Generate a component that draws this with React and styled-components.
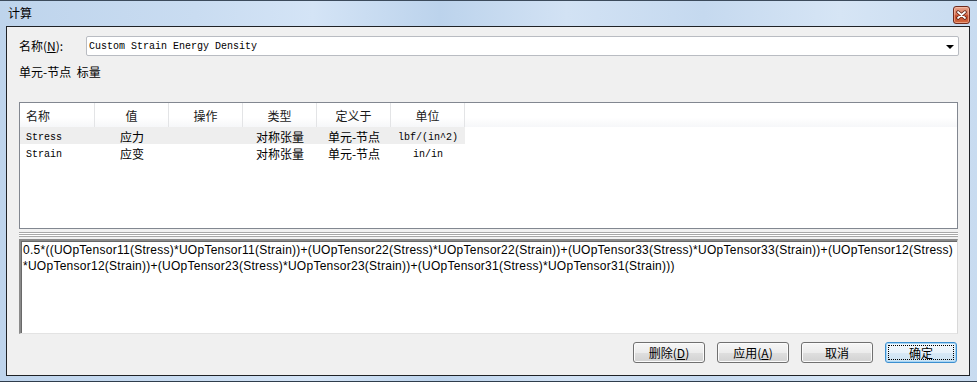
import React from "react";
import styled, { createGlobalStyle } from "styled-components";

const GlobalStyle = createGlobalStyle`
  html, body {
    margin: 0;
    padding: 0;
  }
  body {
    width: 977px;
    height: 382px;
    overflow: hidden;
    background: #ffffff;
    font-family: "Noto Sans CJK SC", sans-serif;
    font-size: 12px;
    color: #000;
  }
`;

const columns = [
  { title: "名称", width: 75, align: "left" },
  { title: "值", width: 74 },
  { title: "操作", width: 74 },
  { title: "类型", width: 74 },
  { title: "定义于", width: 74 },
  { title: "单位", width: 74 },
];

const rows = [
  {
    selected: true,
    cells: [
      { text: "Stress", mono: true },
      { text: "应力" },
      { text: "" },
      { text: "对称张量" },
      { text: "单元-节点" },
      { text: "lbf/(in^2)", mono: true },
    ],
  },
  {
    cells: [
      { text: "Strain", mono: true },
      { text: "应变" },
      { text: "" },
      { text: "对称张量" },
      { text: "单元-节点" },
      { text: "in/in", mono: true },
    ],
  },
];

const expression = [
  "0.5*((UOpTensor11(Stress)*UOpTensor11(Strain))+(UOpTensor22(Stress)*UOpTensor22(Strain))+(UOpTensor33(Stress)*UOpTensor33(Strain))+(UOpTensor12(Stress)",
  "*UOpTensor12(Strain))+(UOpTensor23(Stress)*UOpTensor23(Strain))+(UOpTensor31(Stress)*UOpTensor31(Strain)))",
];

const App = () => {
  return (
    <>
      <GlobalStyle />
      <Window>
        <TitleBar>
          <Title>计算</Title>
          <CloseButton>
            <svg width="11" height="10" viewBox="0 0 11 10">
              <path
                d="M2 2 L9 8 M9 2 L2 8"
                stroke="#5a1d10"
                strokeWidth="3.4"
                strokeLinecap="round"
              />
              <path
                d="M2 2 L9 8 M9 2 L2 8"
                stroke="#ffffff"
                strokeWidth="1.8"
                strokeLinecap="round"
              />
            </svg>
          </CloseButton>
        </TitleBar>
        <Client>
          <NameRow>
            <Label>
              名称(<u>N</u>):
            </Label>
            <Combo>
              <ComboText>Custom Strain Energy Density</ComboText>
              <ComboArrow />
            </Combo>
          </NameRow>
          <TypeLabel>单元-节点 标量</TypeLabel>
          <Table>
            <HeaderRow>
              {columns.map((col) => (
                <HeaderCell key={col.title} $width={col.width} $align={col.align}>
                  {col.title}
                </HeaderCell>
              ))}
            </HeaderRow>
            {rows.map((row, i) => (
              <Row key={i} $selected={row.selected}>
                {row.cells.map((cell, j) => (
                  <Cell key={j} $width={columns[j].width} $align={columns[j].align}>
                    {cell.mono ? <Mono>{cell.text}</Mono> : cell.text}
                  </Cell>
                ))}
              </Row>
            ))}
          </Table>
          <Splitter />
          <ExpressionBox>
            {expression.map((line) => (
              <ExpressionLine key={line}>{line}</ExpressionLine>
            ))}
          </ExpressionBox>
          <ButtonRow>
            <Button>
              删除(<u>D</u>)
            </Button>
            <Button>
              应用(<u>A</u>)
            </Button>
            <Button>取消</Button>
            <Button $focused>确定</Button>
          </ButtonRow>
        </Client>
      </Window>
    </>
  );
};

export default App;

const Window = styled.div`
  width: 977px;
  height: 382px;
  box-sizing: border-box;
  display: flex;
  flex-direction: column;
  padding: 0 7px 5px 6px;
  border-top: 1px solid #3c4b5c;
  border-bottom: 1px solid #2f3d4c;
  background: linear-gradient(
    to right,
    #bed4ec 0%,
    #c9dcf1 20%,
    #d4e4f6 32%,
    #bcd3ec 45%,
    #d2e2f4 58%,
    #c5d9ef 72%,
    #d6e5f5 86%,
    #c8dbf0 100%
  );
`;

const TitleBar = styled.div`
  height: 25px;
  display: flex;
  align-items: flex-start;
  justify-content: space-between;
  padding-left: 2px;
`;

const Title = styled.div`
  font-size: 12px;
  line-height: 24px;
  color: #000;
`;

const CloseButton = styled.div`
  width: 17px;
  height: 18px;
  margin-top: 5px;
  box-sizing: border-box;
  border: 1px solid #6d2a1e;
  border-radius: 3px;
  display: flex;
  align-items: center;
  justify-content: center;
  background: linear-gradient(
    to bottom,
    #e9a58e 0%,
    #d8785c 45%,
    #c24a2c 55%,
    #d46a3f 100%
  );
  box-shadow: inset 0 0 0 1px rgba(255, 210, 190, 0.5);
`;

const Client = styled.div`
  flex: 1;
  display: flex;
  flex-direction: column;
  border: 1px solid #1f2226;
  background: #f0f0f0;
  padding: 9px 10px 0 12px;
`;

const NameRow = styled.div`
  height: 20px;
  display: flex;
  align-items: center;
`;

const Label = styled.div`
  width: 67px;
  flex-shrink: 0;
  font-size: 12px;
  line-height: 20px;
  u {
    text-decoration: underline;
  }
`;

const Combo = styled.div`
  flex: 1;
  height: 20px;
  box-sizing: border-box;
  border: 1px solid #b9bcc2;
  border-radius: 2px;
  background: #ffffff;
  display: flex;
  align-items: center;
  justify-content: space-between;
  padding: 0 4px 0 2px;
`;

const ComboText = styled.span`
  font-family: "Liberation Mono", monospace;
  font-size: 10px;
  color: #000;
`;

const ComboArrow = styled.span`
  width: 0;
  height: 0;
  border-left: 4px solid transparent;
  border-right: 4px solid transparent;
  border-top: 4px solid #000;
  margin-top: 1px;
`;

const TypeLabel = styled.div`
  margin-top: 8px;
  height: 16px;
  line-height: 16px;
  font-size: 12px;
  word-spacing: 3px;
`;

const Table = styled.div`
  margin-top: 22px;
  height: 127px;
  box-sizing: border-box;
  border: 1px solid #828790;
  background: #ffffff;
  margin-right: 1px;
`;

const HeaderRow = styled.div`
  height: 24px;
  display: flex;
  background: linear-gradient(to bottom, #ffffff 0%, #ffffff 60%, #f6f7f9 100%);
`;

const HeaderCell = styled.div`
  width: ${(p) => p.$width}px;
  box-sizing: border-box;
  border-right: 1px solid #e3e4e6;
  display: flex;
  align-items: center;
  justify-content: ${(p) => (p.$align === "left" ? "flex-start" : "center")};
  padding-left: ${(p) => (p.$align === "left" ? "6px" : "0")};
  font-size: 12px;
  color: #1a1a1a;
`;

const Row = styled.div`
  height: 17px;
  display: flex;
  width: 445px;
  background: ${(p) => (p.$selected ? "#eeeeee" : "transparent")};
`;

const Cell = styled.div`
  width: ${(p) => p.$width}px;
  box-sizing: border-box;
  display: flex;
  align-items: center;
  justify-content: ${(p) => (p.$align === "left" ? "flex-start" : "center")};
  padding-left: ${(p) => (p.$align === "left" ? "6px" : "0")};
  padding-top: 2px;
  font-size: 12px;
  white-space: nowrap;
`;

const Mono = styled.span`
  font-family: "Liberation Mono", monospace;
  font-size: 10px;
  padding-top: 1px;
`;

const Splitter = styled.div`
  height: 10px;
  margin-right: 1px;
  background-image: linear-gradient(
    to bottom,
    transparent 0px,
    transparent 3px,
    #a7a7a7 3px,
    #a7a7a7 4px,
    #ffffff 4px,
    #ffffff 5px,
    #a7a7a7 5px,
    #a7a7a7 6px,
    #ffffff 6px,
    #ffffff 7px,
    #a7a7a7 7px,
    #a7a7a7 8px,
    transparent 8px
  );
`;

const ExpressionBox = styled.div`
  height: 95px;
  box-sizing: border-box;
  margin-right: 1px;
  border-top: 2px solid #8a8a8a;
  border-left: 2px solid #8a8a8a;
  border-right: 1px solid #d8d8d8;
  border-bottom: 1px solid #e3e3e3;
  box-shadow: inset 1px 1px 0 #696969;
  background: #ffffff;
  padding: 1px 0 0 2px;
  overflow: hidden;
`;

const ExpressionLine = styled.div`
  font-family: "Liberation Sans", Arial, sans-serif;
  font-size: 12px;
  line-height: 16px;
  letter-spacing: 0.26px;
  white-space: nowrap;
  color: #000;
`;

const ButtonRow = styled.div`
  margin-top: 8px;
  display: flex;
  justify-content: flex-end;
  gap: 12px;
  padding-right: 2px;
`;

const Button = styled.div`
  width: 72px;
  height: 21px;
  box-sizing: border-box;
  border: 1px solid ${(p) => (p.$focused ? "#3c8fd0" : "#707070")};
  border-radius: 3px;
  display: flex;
  align-items: center;
  justify-content: center;
  font-size: 12px;
  color: #000;
  position: relative;
  background: ${(p) =>
    p.$focused
      ? "linear-gradient(to bottom, #f4f9fd 0%, #e8f2fa 50%, #d8e9f6 50%, #cde3f3 100%)"
      : "linear-gradient(to bottom, #f6f6f6 0%, #ececec 50%, #dfdfdf 50%, #d2d2d2 100%)"};
  box-shadow: ${(p) =>
    p.$focused ? "inset 0 0 0 1px #a8d6f5" : "inset 0 0 0 1px #fbfbfb"};
  outline: ${(p) => (p.$focused ? "1px dotted #000" : "none")};
  outline-offset: -4px;
  u {
    text-decoration: underline;
  }
`;
